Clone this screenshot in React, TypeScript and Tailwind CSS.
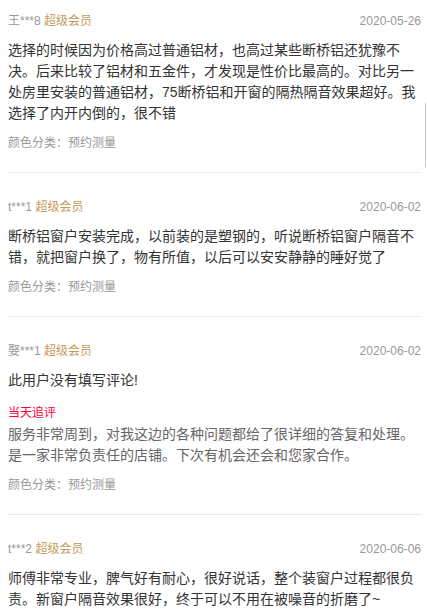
import React from "react";

type Review = {
  name: string;
  date: string;
  body: string;
  followUp?: { label: string; text: string };
  sku: string;
};

const reviews: Review[] = [
  {
    name: "王***8",
    date: "2020-05-26",
    body:
      "选择的时候因为价格高过普通铝材，也高过某些断桥铝还犹豫不决。后来比较了铝材和五金件，才发现是性价比最高的。对比另一处房里安装的普通铝材，75断桥铝和开窗的隔热隔音效果超好。我选择了内开内倒的，很不错",
    sku: "颜色分类：预约测量",
  },
  {
    name: "t***1",
    date: "2020-06-02",
    body: "断桥铝窗户安装完成，以前装的是塑钢的，听说断桥铝窗户隔音不错，就把窗户换了，物有所值，以后可以安安静静的睡好觉了",
    sku: "颜色分类：预约测量",
  },
  {
    name: "娶***1",
    date: "2020-06-02",
    body: "此用户没有填写评论!",
    followUp: {
      label: "当天追评",
      text: "服务非常周到，对我这边的各种问题都给了很详细的答复和处理。是一家非常负责任的店铺。下次有机会还会和您家合作。",
    },
    sku: "颜色分类：预约测量",
  },
  {
    name: "t***2",
    date: "2020-06-06",
    body: "师傅非常专业，脾气好有耐心，很好说话，整个装窗户过程都很负责。新窗户隔音效果很好，终于可以不用在被噪音的折磨了~",
    sku: "颜色分类：预约测量",
  },
];

function ReviewItem({ review, first }: { review: Review; first: boolean }) {
  return (
    <div className={`border-b border-[#e8e8e8] pb-[21px] ${first ? "pt-[13px]" : "pt-[26px]"}`}>
      <div className="flex items-center justify-between text-[12px] leading-[16px]">
        <div>
          <span className="text-[#999999]">{review.name}</span>{" "}
          <span className="text-[#c8995a]">超级会员</span>
        </div>
        <span className="text-[#999999]">{review.date}</span>
      </div>
      <p className="mt-[11px] text-[14px] leading-[21px] text-[#333333]">{review.body}</p>
      {review.followUp && (
        <div className="mt-3">
          <div className="text-[12px] leading-[21px] text-[#ff0036]">{review.followUp.label}</div>
          <p className="text-[14px] leading-[21px] text-[#666666]">{review.followUp.text}</p>
        </div>
      )}
      <div className="mt-[11px] text-[12px] leading-[16px] text-[#999999]">{review.sku}</div>
    </div>
  );
}

export default function App() {
  return (
    <div
      className="relative h-[609px] overflow-hidden bg-white pl-2 pr-[6px]"
      style={{ fontFamily: '"Liberation Sans", "Noto Sans CJK SC", sans-serif' }}
    >
      {reviews.map((r, i) => (
        <ReviewItem key={i} review={r} first={i === 0} />
      ))}
      <div className="absolute right-[1px] top-[103px] h-[64px] w-px bg-[#c8c8c8]" />
    </div>
  );
}
